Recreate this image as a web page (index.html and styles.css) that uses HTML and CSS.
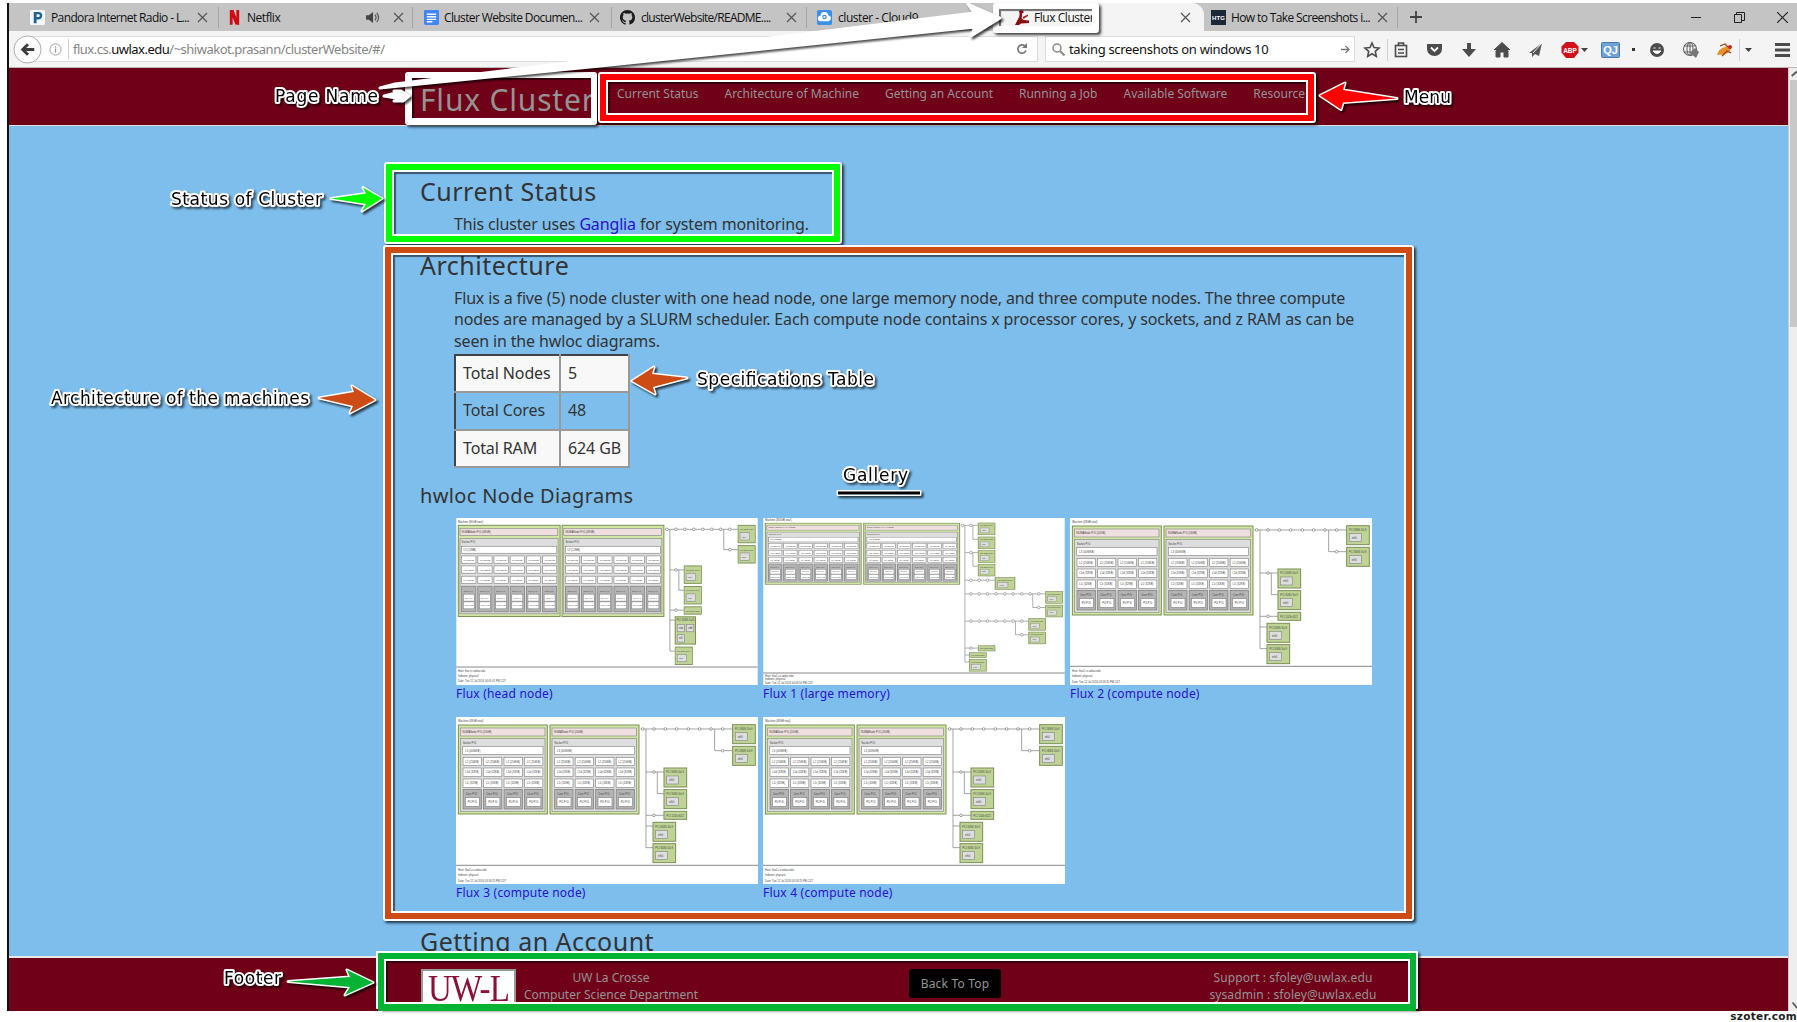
FILE: index.html
```html
<!DOCTYPE html>
<html lang="en">
<head>
<meta charset="utf-8">
<title>Flux Cluster</title>
<link rel="stylesheet" href="styles.css">
</head>
<body>
<svg class="defs" aria-hidden="true">
  <defs>
    <g id="close"><path d="M1 1l9 9M10 1l-9 9" fill="none" stroke="#555" stroke-width="1.2"/></g>
    <g id="core6">
      <g fill="#fff" stroke="#888" stroke-width="2"><rect x="0" y="0" width="43" height="22"/><rect x="0" y="30" width="43" height="22"/><rect x="0" y="61" width="43" height="22"/></g>
      <rect x="0" y="91" width="43" height="77" fill="#b4b4b4" stroke="#777" stroke-width="2"/>
      <g fill="#fff" stroke="#888" stroke-width="2"><rect x="5" y="115" width="33" height="21"/><rect x="5" y="138" width="33" height="21"/></g>
      <g class="tiny"><text x="6" y="14">L2 (256KB)</text><text x="6" y="45">L1d (32KB)</text><text x="6" y="76">L1i (32KB)</text><text x="6" y="107">Core P#0</text><text x="10" y="129">PU P#0</text><text x="9" y="152">PU P#12</text></g>
    </g>
    <g id="numa6">
      <rect x="1" y="1" width="306" height="274" fill="#d2e7a4" stroke="#7c8f56" stroke-width="3"/>
      <rect x="6" y="10" width="294" height="22" fill="#efdfde" stroke="#888" stroke-width="2"/>
      <rect x="6" y="41" width="295" height="226" fill="#dedede" stroke="#888" stroke-width="2"/>
      <rect x="11" y="64" width="286" height="21" fill="#fff" stroke="#888" stroke-width="2"/>
      <text x="11" y="24">NUMANode P#0 (48GB)</text><text x="11" y="54">Socket P#0</text><text x="17" y="78">L3 (12MB)</text>
      <use href="#core6" x="11" y="93"/><use href="#core6" x="59.6" y="93"/><use href="#core6" x="108.2" y="93"/><use href="#core6" x="156.8" y="93"/><use href="#core6" x="205.4" y="93"/><use href="#core6" x="254" y="93"/>
    </g>
    <g id="core4">
      <g fill="#fff" stroke="#888" stroke-width="2"><rect x="0" y="0" width="55" height="25"/><rect x="0" y="32" width="55" height="25"/><rect x="0" y="65" width="55" height="25"/></g>
      <rect x="0" y="96" width="55" height="59" fill="#b4b4b4" stroke="#777" stroke-width="2"/>
      <rect x="7" y="121" width="42" height="26" fill="#fff" stroke="#888" stroke-width="2"/>
      <text x="7" y="16">L2 (256KB)</text><text x="7" y="48">L1d (32KB)</text><text x="7" y="81">L1i (32KB)</text><text x="8" y="114">Core P#0</text><text x="14" y="137">PU P#0</text>
    </g>
    <g id="numa4">
      <rect x="1" y="1" width="267" height="267" fill="#d2e7a4" stroke="#7c8f56" stroke-width="3"/>
      <rect x="7" y="10" width="254" height="24" fill="#efdfde" stroke="#888" stroke-width="2"/>
      <rect x="7" y="42" width="254" height="218" fill="#dedede" stroke="#888" stroke-width="2"/>
      <rect x="14" y="65" width="241" height="25" fill="#fff" stroke="#888" stroke-width="2"/>
      <text x="13" y="25">NUMANode P#0 (24GB)</text><text x="14" y="57">Socket P#0</text><text x="22" y="81">L3 (4096KB)</text>
      <use href="#core4" x="15" y="98"/><use href="#core4" x="76.5" y="98"/><use href="#core4" x="138" y="98"/><use href="#core4" x="199.5" y="98"/>
    </g>
    <g id="dev">
      <rect width="68" height="57" fill="#bfd494" stroke="#7c8f56" stroke-width="3"/><rect x="8" y="24" width="36" height="24" fill="#dedede" stroke="#888" stroke-width="2"/>
      <text x="7" y="16">PCI 8086:10c9</text><text x="15" y="40">eth0</text>
    </g>
    <g id="devs"><rect width="68" height="24" fill="#bfd494" stroke="#7c8f56" stroke-width="3"/><text x="7" y="16">PCI 102b:0522</text></g>
    <symbol id="compute" viewBox="0 0 906 502">
      <rect width="906" height="502" fill="#fff"/>
      <text x="7" y="14">Machine (48GB total)</text>
      <use href="#numa4" x="6" y="23"/><use href="#numa4" x="281" y="23"/>
      <path d="M554 36H830M776 36V101H830M570 36V392H591M570 165H624M604 165V230H624M570 295H624M570 327H591" fill="none" stroke="#777" stroke-width="2"/>
      <g fill="#fff" stroke="#777" stroke-width="2"><circle cx="560" cy="36" r="4"/><circle cx="594" cy="36" r="4"/><circle cx="628" cy="36" r="4"/><circle cx="662" cy="36" r="4"/><circle cx="697" cy="36" r="4"/><circle cx="731" cy="36" r="4"/><circle cx="765" cy="36" r="4"/><circle cx="800" cy="36" r="4"/><circle cx="800" cy="101" r="4"/><circle cx="594" cy="165" r="4"/><circle cx="594" cy="295" r="4"/></g>
      <use href="#dev" x="830" y="23"/><use href="#dev" x="830" y="88"/><use href="#dev" x="624" y="153"/><use href="#dev" x="624" y="218"/><use href="#devs" x="624" y="283"/><use href="#dev" x="591" y="316"/><use href="#dev" x="591" y="380"/>
      <path d="M0 445H906" stroke="#888" stroke-width="3"/>
      <text x="6" y="461">Host: flux2.cs.uwlax.edu</text><text x="6" y="477">Indexes: physical</text><text x="6" y="494">Date: Tue 12 Jul 2016 03:58:25 PM CDT</text>
    </symbol>
  </defs>
</svg>

<div class="window">
  <div class="tabs">
    <div class="tab first">
      <svg class="fav" viewBox="0 0 16 16"><rect width="16" height="16" rx="2" fill="#f5f8fb"/><path d="M4 2h5c6 0 5 8 0 8H7v4H4zM7 4.500v3h2c2 0 2-3 0-3z" fill="#1d6292" fill-rule="evenodd"/></svg>
      <span class="t1">Pandora Internet Radio - L...</span><svg class="x" viewBox="0 0 11 11"><use href="#close"/></svg>
    </div>
    <div class="tab">
      <svg class="fav" viewBox="0 0 16 16"><path d="M3 0h4l3 8V0h3v16l-4-.5L6 8v7.500L3 16z" fill="#d20a14"/></svg>
      <span class="t2">Netflix</span>
      <svg class="snd" viewBox="0 0 16 14"><path d="M0 4.500h3L7.500 1v12L3 9.500H0z" fill="#444"/><path d="M9.500 4q2.500 3 0 6M11.500 2q4 5 0 10" fill="none" stroke="#555" stroke-width="1.300"/></svg>
      <svg class="x" viewBox="0 0 11 11"><use href="#close"/></svg>
    </div>
    <div class="tab">
      <svg class="fav" viewBox="0 0 16 16"><rect width="16" height="16" rx="1.500" fill="#4285f4"/><path d="M3 4.500h10M3 7.200h10M3 9.900h10M3 12.500h6" stroke="#fff" stroke-width="1.400"/></svg>
      <span class="t3">Cluster Website Documen...</span><svg class="x" viewBox="0 0 11 11"><use href="#close"/></svg>
    </div>
    <div class="tab">
      <svg class="fav" viewBox="0 0 16 16"><path d="M8 0C3.580 0 0 3.580 0 8c0 3.540 2.290 6.530 5.470 7.590.4.070.55-.17.55-.38 0-.19-.01-.82-.01-1.490-2.010.37-2.530-.49-2.690-.94-.09-.23-.48-.94-.82-1.130-.28-.15-.68-.52-.01-.53.63-.01 1.080.58 1.230.82.72 1.210 1.870.87 2.330.66.07-.52.28-.87.51-1.070-1.780-.2-3.640-.89-3.640-3.950 0-.87.31-1.590.82-2.150-.08-.2-.36-1.020.08-2.120 0 0 .67-.21 2.200.82a7.600 7.600 0 0 1 4 0c1.530-1.040 2.200-.82 2.200-.82.44 1.100.16 1.920.08 2.120.51.56.82 1.270.82 2.150 0 3.070-1.870 3.750-3.650 3.950.29.25.54.73.54 1.480 0 1.070-.01 1.930-.01 2.200 0 .21.15.46.55.38A8 8 0 0 0 16 8c0-4.420-3.580-8-8-8z" fill="#1b1b1b"/></svg>
      <span class="t4">clusterWebsite/README....</span><svg class="x" viewBox="0 0 11 11"><use href="#close"/></svg>
    </div>
    <div class="tab c9">
      <svg class="fav" viewBox="0 0 16 16"><rect width="16" height="16" rx="2" fill="#3d8fe8"/><path d="M4 12a3 3 0 0 1-.3-6A4.200 4.200 0 0 1 12 5.500a3.300 3.300 0 0 1 .3 6.500z" fill="#fff"/><circle cx="8" cy="7.500" r="1.800" fill="none" stroke="#3d8fe8" stroke-width="1.200"/></svg>
      <span class="t5">cluster - Cloud9</span>
    </div>
    <div class="tab active">
      <svg class="fav" viewBox="0 0 15 15"><path d="M4 1Q5 0 7.500.5L9 2 8 3 7 3.500Q7.500 6 6.500 8L8.500 10 14 10.500V13L6 13.500 4 15H0L3 9Q5 6 4.500 3z" fill="#8a0d14"/><path d="M7.500 7L13 4.500V6L8.500 9z" fill="#a3242a"/></svg>
      <span class="t6">Flux Cluster</span><svg class="x" viewBox="0 0 11 11"><use href="#close"/></svg>
    </div>
    <div class="tab htg">
      <svg class="fav" viewBox="0 0 16 16"><rect width="16" height="16" fill="#1b2836"/><text x="8" y="11" text-anchor="middle" class="htgt">HTG</text></svg>
      <span class="t7">How to Take Screenshots i...</span><svg class="x" viewBox="0 0 11 11"><use href="#close"/></svg>
    </div>
    <svg class="plus" viewBox="0 0 12 12"><path d="M6 0v12M0 6h12" stroke="#444" stroke-width="1.800"/></svg>
    <div class="winbtns">
      <svg width="11" height="11" viewBox="0 0 11 11"><path d="M0 5.500h10" stroke="#222"/></svg>
      <svg width="11" height="11" viewBox="0 0 11 11"><path d="M.5 2.500h7v8h-7zM2.500 2.500v-2h8v8h-3" fill="none" stroke="#222"/></svg>
      <svg width="11" height="11" viewBox="0 0 11 11"><path d="M0 0l11 11M11 0L0 11" stroke="#222" stroke-width="1.200"/></svg>
    </div>
  </div>

  <div class="toolbar">
    <svg class="back" viewBox="0 0 30 30"><circle cx="15" cy="15" r="14" fill="#fdfdfd" stroke="#aaa"/><path d="M22 15H10M15.500 9.500L10 15l5.500 5.500" fill="none" stroke="#3d3d3d" stroke-width="3"/></svg>
    <div class="url">
      <svg class="info" viewBox="0 0 14 14"><circle cx="7" cy="7" r="6" fill="none" stroke="#999"/><path d="M7 3.500v1.500M7 6v4.500" stroke="#999" stroke-width="1.300"/></svg>
      <span class="addr">flux.cs.<b>uwlax.edu</b>/~shiwakot.prasann/clusterWebsite/#/</span>
      <svg class="reload" viewBox="0 0 12 12"><path d="M10 7.500A4.200 4.200 0 1 1 9 3" fill="none" stroke="#777" stroke-width="1.700"/><path d="M11 0v5H6z" fill="#777"/></svg>
    </div>
    <div class="search">
      <svg width="13" height="13" viewBox="0 0 13 13"><circle cx="5" cy="5" r="4" fill="none" stroke="#888" stroke-width="1.500"/><path d="M8 8l4.500 4.500" stroke="#888" stroke-width="2"/></svg>
      <span class="q">taking screenshots on windows 10</span>
      <svg width="9" height="9" viewBox="0 0 9 9"><path d="M0 4.500h8M4.500 1L8 4.500 4.500 8" fill="none" stroke="#777" stroke-width="1.300"/></svg>
    </div>
    <svg class="tools" viewBox="0 0 440 36">
      <g fill="none" stroke="#4c4c4c" stroke-width="1.600">
        <path d="M16 12l2 4.500 5 .5-3.700 3.400 1 5L16 22.800l-4.300 2.600 1-5L9 17l5-.5z"/>
        <rect x="39.500" y="14.500" width="11" height="11"/><path d="M42.500 14v-2h5v2M42 18.500h6M42 22h6"/>
      </g>
      <path d="M31.500 8v22M383.500 8v22" stroke="#d0d0d0"/>
      <path d="M71 13h15v5a7.500 7 0 0 1-15 0z" fill="#4c4c4c"/><path d="M75 16.500l3.500 3.500 3.500-3.500" fill="none" stroke="#fff" stroke-width="1.800"/>
      <path d="M111 12h4v6h5l-7 8-7-8h5z" fill="#4c4c4c"/>
      <path d="M138 19l8-7.500 8 7.500M140 19.500l6-5.500 6 5.500V26h-4v-5h-4v5h-4z" fill="#4c4c4c" stroke="#4c4c4c"/>
      <path d="M173 22l13-10-3 13-4-2-3 3v-4z" fill="#555"/><path d="M186 12l-9 10" stroke="#eee"/>
      <path d="M210 11h8l4.500 4.500v6L218 27h-8l-4.500-5.500v-6z" fill="#d0101a"/><text x="214" y="22" text-anchor="middle" class="abp">ABP</text>
      <path d="M225 17h7l-3.500 4zM389 17h7l-3.500 4z" fill="#444"/>
      <rect x="245.500" y="11.500" width="18" height="15" rx="1" fill="#6fa3d8" stroke="#4a79ad"/><text x="254.500" y="23" text-anchor="middle" class="qj">QJ</text>
      <rect x="276" y="17" width="3" height="3" fill="#333"/>
      <circle cx="301" cy="19" r="7" fill="#4c4c4c"/><path d="M297.500 17h2M302.500 17h2M297 20q4 5 8 0z" stroke="#fff" fill="#fff"/>
      <g fill="none" stroke="#666" stroke-width="1.100"><circle cx="334" cy="18" r="6.500"/><ellipse cx="334" cy="18" rx="3" ry="6.500"/><path d="M328 15h12M328 21h12M334 11v14"/></g><path d="M334 22l5-5 4 4-3 6z" fill="#777"/>
      <path d="M361 24q1-6 8-8 4-2 6 1-1 5-6 6-4 1-8 1z" fill="#e8912a"/><path d="M364 15l5-2 3 3M366 25l5-5 4 2" stroke="#9c3f10" fill="none" stroke-width="1.200"/><circle cx="374" cy="16" r="2" fill="#c2271e"/>
      <path d="M419 13.500h15M419 19h15M419 24.500h15" stroke="#4c4c4c" stroke-width="3"/>
    </svg>
  </div>

  <div class="view">
    <div class="site">
      <header>
        <h1>Flux Cluster</h1>
        <nav><a>Current Status</a><a>Architecture of Machine</a><a>Getting an Account</a><a>Running a Job</a><a>Available Software</a><a>Resource</a></nav>
      </header>
      <main>
        <h2>Current Status</h2>
        <p class="p-status">This cluster uses <a>Ganglia</a> for system monitoring.</p>
        <h2 class="h-arch">Architecture</h2>
        <p class="p-arch">Flux is a five (5) node cluster with one head node, one large memory node, and three compute nodes. The three compute<br>nodes are managed by a SLURM scheduler. Each compute node contains x processor cores, y sockets, and z RAM as can be<br>seen in the hwloc diagrams.</p>
        <table>
          <tr><td>Total Nodes</td><td>5</td></tr>
          <tr><td>Total Cores</td><td>48</td></tr>
          <tr><td>Total RAM</td><td>624 GB</td></tr>
        </table>
        <h3>hwloc Node Diagrams</h3>
        <div class="gallery">
          <figure>
            <svg class="dia" viewBox="0 0 906 502">
              <rect width="906" height="502" fill="#fff"/><text x="5" y="14">Machine (96GB total)</text>
              <use href="#numa6" x="5" y="21"/><use href="#numa6" x="317" y="21"/>
              <path d="M628 34H846M804 34V95H846M642 34V400H657M642 156H685M669 156V217H685M642 277H685M642 307H657" fill="none" stroke="#777" stroke-width="2"/>
              <g fill="#fff" stroke="#777" stroke-width="2"><circle cx="633" cy="34" r="4"/><circle cx="660" cy="34" r="4"/><circle cx="687" cy="34" r="4"/><circle cx="714" cy="34" r="4"/><circle cx="741" cy="34" r="4"/><circle cx="768" cy="34" r="4"/><circle cx="795" cy="34" r="4"/><circle cx="822" cy="34" r="4"/><circle cx="822" cy="95" r="4"/><circle cx="660" cy="156" r="4"/><circle cx="660" cy="277" r="4"/></g>
              <use href="#dev" transform="translate(847 22) scale(.76 .92)"/><use href="#dev" transform="translate(847 83) scale(.76 .92)"/><use href="#dev" transform="translate(685 144) scale(.76 .92)"/><use href="#dev" transform="translate(685 206) scale(.76 .92)"/><use href="#devs" transform="translate(685 267) scale(.76 .92)"/>
              <rect x="658" y="297" width="61" height="82" fill="#bfd494" stroke="#7c8f56" stroke-width="3"/><g fill="#dedede" stroke="#888" stroke-width="2"><rect x="664" y="320" width="22" height="22"/><rect x="692" y="320" width="22" height="22"/><rect x="664" y="351" width="22" height="22"/></g><text x="663" y="310">PCI 8086:3a20</text><text x="669" y="334">sda</text><text x="697" y="334">sdb</text><text x="669" y="365">sr0</text>
              <use href="#dev" transform="translate(658 388) scale(.76 .92)"/>
              <path d="M0 448H906" stroke="#888" stroke-width="3"/><text x="5" y="463">Host: flux.cs.uwlax.edu</text><text x="5" y="479">Indexes: physical</text><text x="5" y="494">Date: Tue 12 Jul 2016 04:01:01 PM CDT</text>
            </svg>
            <figcaption><a>Flux (head node)</a></figcaption>
          </figure>
          <figure>
            <svg class="dia" viewBox="0 0 906 502">
              <rect width="906" height="502" fill="#fff"/><text x="5" y="10">Machine (384GB total)</text>
              <use href="#numa6" transform="translate(5 15) scale(.942 .67)"/><use href="#numa6" transform="translate(301 15) scale(.942 .67)"/>
              <path d="M594 22H645M630 22V64H645M606 22V433H620M606 104H645M630 104V145H645M606 187H696M606 228H848M810 228V269H848M606 310H797M758 310V351H797M606 391H645M606 412H620" fill="none" stroke="#888" stroke-width="2"/>
              <g fill="#fff" stroke="#888" stroke-width="2"><circle cx="599" cy="22" r="4"/><circle cx="624" cy="22" r="4"/><circle cx="624" cy="104" r="4"/><circle cx="624" cy="187" r="4"/><circle cx="649" cy="187" r="4"/><circle cx="674" cy="187" r="4"/><circle cx="624" cy="228" r="4"/><circle cx="649" cy="228" r="4"/><circle cx="674" cy="228" r="4"/><circle cx="700" cy="228" r="4"/><circle cx="726" cy="228" r="4"/><circle cx="751" cy="228" r="4"/><circle cx="777" cy="228" r="4"/><circle cx="802" cy="228" r="4"/><circle cx="828" cy="228" r="4"/><circle cx="828" cy="269" r="4"/><circle cx="624" cy="310" r="4"/><circle cx="649" cy="310" r="4"/><circle cx="674" cy="310" r="4"/><circle cx="700" cy="310" r="4"/><circle cx="726" cy="310" r="4"/><circle cx="751" cy="310" r="4"/><circle cx="777" cy="310" r="4"/><circle cx="777" cy="351" r="4"/><circle cx="624" cy="391" r="4"/></g>
              <use href="#dev" transform="translate(646 15) scale(.74 .62)"/><use href="#dev" transform="translate(646 57) scale(.74 .62)"/><use href="#dev" transform="translate(646 98) scale(.74 .62)"/><use href="#dev" transform="translate(646 139) scale(.74 .62)"/><use href="#dev" transform="translate(697 179) scale(.87 .62)"/><use href="#dev" transform="translate(849 221) scale(.74 .62)"/><use href="#dev" transform="translate(849 262) scale(.74 .62)"/><use href="#dev" transform="translate(798 302) scale(.74 .62)"/><use href="#dev" transform="translate(798 343) scale(.74 .62)"/><use href="#devs" transform="translate(646 384) scale(.74 .65)"/><use href="#devs" transform="translate(620 405) scale(.74 .62)"/><use href="#dev" transform="translate(620 425) scale(.74 .62)"/>
              <path d="M0 466H906" stroke="#888" stroke-width="3"/><text x="5" y="477">Host: flux1.cs.uwlax.edu</text><text x="5" y="487">Indexes: physical</text><text x="5" y="498">Date: Tue 12 Jul 2016 04:03:50 PM CDT</text>
            </svg>
            <figcaption><a>Flux 1 (large memory)</a></figcaption>
          </figure>
          <figure><svg class="dia"><use href="#compute" width="302" height="167.300"/></svg><figcaption><a>Flux 2 (compute node)</a></figcaption></figure>
          <figure><svg class="dia"><use href="#compute" width="302" height="167.300"/></svg><figcaption><a>Flux 3 (compute node)</a></figcaption></figure>
          <figure><svg class="dia"><use href="#compute" width="302" height="167.300"/></svg><figcaption><a>Flux 4 (compute node)</a></figcaption></figure>
        </div>
        <h2 class="h-acct">Getting an Account</h2>
      </main>
      <footer>
        <div class="logo"><span>UW-L</span></div>
        <div class="dept">UW La Crosse<br>Computer Science Department</div>
        <a class="top">Back To Top</a>
        <div class="contact">Support : sfoley@uwlax.edu<br>sysadmin : sfoley@uwlax.edu</div>
      </footer>
    </div>
    <div class="scroll">
      <svg viewBox="0 0 9 14"><path d="M3 9l6-5" stroke="#555" stroke-width="2"/></svg>
      <div class="thumb"></div>
      <svg viewBox="0 0 9 14"><path d="M4 4l5 6" stroke="#555" stroke-width="2"/></svg>
    </div>
  </div>
</div>
<div class="credit">szoter.com</div>

<div class="frame f-green"></div>
<div class="frame f-orange"></div>
<div class="frame f-footer"></div>
<div class="frame f-name"></div>
<div class="frame f-menu"></div>
<div class="frame f-tab"></div>

<svg class="notes" width="1797" height="1022" viewBox="0 0 1797 1022">
  <g class="arrow">
    <path d="M380 88L395 84 974 13 968 4 1000 18 971 36 975 27 600 66z" fill="#fff"/>
    <path d="M384 96L396 93 394 91 401 91 409 96 403 101 394 101 396 98z" fill="#fff"/>
    <path d="M1320 95.500L1345 83 1343 90 1397 98.500 1343 102.500 1341 109.500z" fill="#f00"/>
    <path d="M331 198.500L366 193.500 363 187.500 382 198.500 362 211 366 204z" fill="#0f0"/>
    <path d="M319 398L354 392 352 386 375 400 350 413 353 406z" fill="#cd4b14"/>
    <path d="M632 381L654 367 652 374 687 378 653 387 655 394z" fill="#cd4b14"/>
    <path d="M288 981.500L350 977 347 970 373 982.500 345 995 350 987z" fill="#04b334"/>
  </g>
  <g class="label">
    <text x="275" y="102" textLength="103">Page Name</text>
    <text x="1404" y="103" textLength="47">Menu</text>
    <text x="171" y="205" textLength="151">Status of Cluster</text>
    <text x="51" y="404" textLength="258">Architecture of the machines</text>
    <text x="697" y="385" textLength="177">Specifications Table</text>
    <text x="843" y="481" textLength="65">Gallery</text>
    <text x="224" y="984" textLength="57">Footer</text>
  </g>
  <g class="arrow"><rect x="838" y="491.500" width="82" height="3" fill="#000"/></g>
</svg>
</body>
</html>
```

FILE: styles.css
```css
* { box-sizing: border-box; }
body {
  margin: 0; width: 1797px; height: 1022px; overflow: hidden; position: relative;
  background: #fff; padding: 3px 0 0 7px;
  font-family: "Noto Sans", "Open Sans", sans-serif; color: #333;
}
.defs { position: absolute; width: 0; height: 0; }
svg { display: block; flex: none; }
h1, h2, h3, p, figure { margin: 0; font-weight: 400; }
.window { height: 1008px; border-left: 2px solid #111; display: flex; flex-direction: column; overflow: hidden; }

/* browser chrome */
.tabs { height: 28px; flex: none; background: #c4c4c4; display: flex; align-items: center; padding-left: 10px; font-family: "Open Sans", sans-serif; font-size: 12px; color: #111; }
.tab { width: 197px; height: 21px; display: flex; align-items: center; border-right: 1px solid #a5a5a5; padding: 0 10px 0 12px; white-space: nowrap; }
.tab span { margin-left: 6px; flex: 1; min-width: 0; }
.tab.first { width: 200px; padding-left: 11px; }
.tab:nth-child(2) { width: 194px; padding-left: 8px; padding-right: 8px; }
.tab:nth-child(2) span { margin-left: 5px; }
.tab:nth-child(3) { width: 199px; padding-left: 11px; padding-right: 11px; }
.tab:nth-child(3) span { margin-left: 5px; }
.tab:nth-child(4) { width: 195px; padding-left: 8px; padding-right: 9px; }
.tab.c9 { border: 0; width: 188px; padding-left: 10px; }
.tab.active { width: 209px; height: 28px; border: 0; background: #f4f4f4; border-radius: 8px 12px 0 0; padding: 0 13px 0 20px; }
.tab.active span { margin-left: 4px; }
.tab.htg { width: 194px; padding: 0 9px 0 7px; }
.tab.htg span { margin-left: 5px; }
.fav { width: 15px; height: 15px; }
.x { width: 11px; height: 11px; }
.snd { width: 15px; height: 13px; margin-right: 12px; }
.plus { width: 12px; height: 12px; margin-left: 12px; }
.htgt { font: bold 6.5px "Liberation Sans", sans-serif; fill: #fff; }
.abp { font: bold 6.5px "Liberation Sans", sans-serif; fill: #fff; }
.qj { font: bold 11px "Liberation Sans", sans-serif; fill: #fff; }
.winbtns { margin-left: auto; display: flex; gap: 32px; padding-right: 9px; }
.t1, .t3, .t7 { letter-spacing: -.62px; }
.t4 { letter-spacing: -.72px; }
.t2, .t5, .t6 { letter-spacing: -.45px; }
.toolbar { height: 37px; flex: none; background: #f4f4f4; border-bottom: 1px solid #b8b8b8; display: flex; align-items: center; padding-left: 4px; }
.back { width: 29px; height: 29px; position: relative; z-index: 1; }
.url { margin-left: -14px; width: 1010px; height: 26px; background: #fff; border: 1px solid #ddd; display: flex; align-items: center; padding-left: 20px; }
.info { width: 13px; height: 13px; }
.addr { margin-left: 6px; padding-left: 4px; border-left: 1px solid #ccc; line-height: 20px; font-size: 13px; letter-spacing: -.5px; color: #858585; flex: 1; white-space: nowrap; }
.addr b { font-weight: 400; color: #111; }
.reload { width: 12px; height: 12px; margin-right: 9px; }
.search { margin-left: 7px; width: 310px; height: 26px; background: #fff; border: 1px solid #ddd; display: flex; align-items: center; padding: 0 4px 0 6px; }
.q { flex: 1; margin-left: 4px; font-size: 13px; letter-spacing: -.32px; color: #111; white-space: nowrap; }
.tools { width: 440px; height: 36px; margin-left: 1px; }

/* site */
.view { flex: 1; display: flex; min-height: 0; }
.site { width: 1779px; display: flex; flex-direction: column; background: #7dbeed; }
header { height: 58px; flex: none; background: #700018; border-bottom: 1px solid #ddd; display: flex; padding-left: 411px; color: #949494; }
h1 { font-size: 30px; line-height: 40px; padding-top: 12px; width: 197px; letter-spacing: .8px; white-space: nowrap; }
nav { display: flex; gap: 26px; font-size: 12px; line-height: 16px; padding-top: 18px; white-space: nowrap; }
main { flex: 1; min-height: 0; overflow: hidden; padding: 48px 0 0 411px; }
h2 { font-size: 25px; line-height: 34px; letter-spacing: .5px; }
h3 { font-size: 20px; line-height: 26px; letter-spacing: .35px; margin-top: 15px; }
p { font-size: 16px; line-height: 21.7px; letter-spacing: -.15px; margin-left: 34px; white-space: nowrap; }
a { color: #2a10cc; }
nav a { color: inherit; }
.p-status { margin-top: 6px; }
.h-arch { margin-top: 12px; }
.p-arch { margin-top: 6px; }
table { margin: 1px 0 0 34px; border-collapse: collapse; border: 2px solid #666; font-size: 16px; width: 176px; letter-spacing: -.12px; }
td { height: 37.5px; padding: 0 7px 2px; border: 2px solid; border-color: #444 #999 #999 #444; white-space: nowrap; }
td:first-child { width: 105px; }
tr:nth-child(odd) { background: #f8f8f8; }
.gallery { margin: 9px 0 0 36px; display: grid; grid-template-columns: repeat(3, 302px); column-gap: 5px; }
figure { height: 199px; }
.dia { width: 302px; height: 167px; }
.dia text, .defs text { font: 8px "Liberation Sans", sans-serif; fill: #444; }
.defs .tiny text { font-size: 6.5px; }
figcaption { font-size: 12px; line-height: 18px; letter-spacing: .2px; }
.h-acct { margin-top: 8px; }
footer { height: 55px; flex: none; background: #700018; border-top: 2px solid #e8e8e8; display: flex; padding: 11px 0 0 412px; color: #949494; font-size: 12px; line-height: 17px; white-space: nowrap; }
.logo { width: 95px; height: 44px; background: #fff; border: 2px solid #999; display: flex; justify-content: center; color: #8b1038; font: 38px/38px "Liberation Serif", serif; letter-spacing: -1px; }
.logo span { transform: scaleX(.87); margin-top: -2px; }
.dept { margin-left: 8px; width: 174px; text-align: center; }
.top { margin-left: 211px; width: 92px; height: 29px; line-height: 29px; border-radius: 3px; background: #000; color: #949494; text-align: center; letter-spacing: .2px; }
.contact { margin-left: 208px; width: 168px; text-align: center; letter-spacing: .1px; }
.scroll { flex: 1; background: #eee; display: flex; flex-direction: column; border-left: 1px solid #ccc; }
.thumb { height: 247px; background: #c8c8c8; margin-bottom: auto; margin-left: 1px; }
.credit { position: absolute; right: 0; bottom: 0; height: 11px; font: bold 10.500px/11px "DejaVu Sans", sans-serif; letter-spacing: .3px; color: #222; }

/* annotations */
.frame { position: absolute; border: 6px solid; outline: 2px solid #fff; border-radius: 1px; box-shadow: 2px 2px 3px 2px rgba(0,0,0,.75), inset 0 0 0 2px #fff, inset 3px 3px 1px 1px rgba(0,0,0,.55); }
.f-green { left: 386px; top: 164px; width: 454px; height: 78px; border-color: #0f0; }
.f-orange { left: 385px; top: 247px; width: 1027px; height: 672px; border-color: #cd4b14; }
.f-footer { left: 378px; top: 953px; width: 1038px; height: 58px; border-color: #04b334; border-bottom-width: 7px; outline: 0; box-shadow: -2px -2px 0 #fff, 2px -2px 0 #fff, 4px 0 3px rgba(0,0,0,.7), inset 0 0 0 2px #fff, inset 3px 3px 1px 1px rgba(0,0,0,.55); }
.f-name { left: 407px; top: 74px; width: 188px; height: 49px; border-color: #fff; border-width: 2px 2px 3px 3px; }
.f-menu { left: 600px; top: 74px; width: 714px; height: 47px; border-color: #f00; border-width: 6px; }
.f-tab { left: 995px; top: 5px; width: 102px; height: 26px; border-color: #fff; border-width: 2px 3px 3px 2px; }
.notes { position: absolute; left: 0; top: 0; }
.arrow path, .arrow rect { stroke: #fff; stroke-width: 3px; stroke-linejoin: round; paint-order: stroke; filter: drop-shadow(2px 2px 1px rgba(0,0,0,.7)); }
.label text { font: 17px "DejaVu Sans", Verdana, sans-serif; fill: #000; stroke: #fff; stroke-width: 4px; stroke-linejoin: round; paint-order: stroke; filter: drop-shadow(2px 2px 1px rgba(0,0,0,.6)); }
```
